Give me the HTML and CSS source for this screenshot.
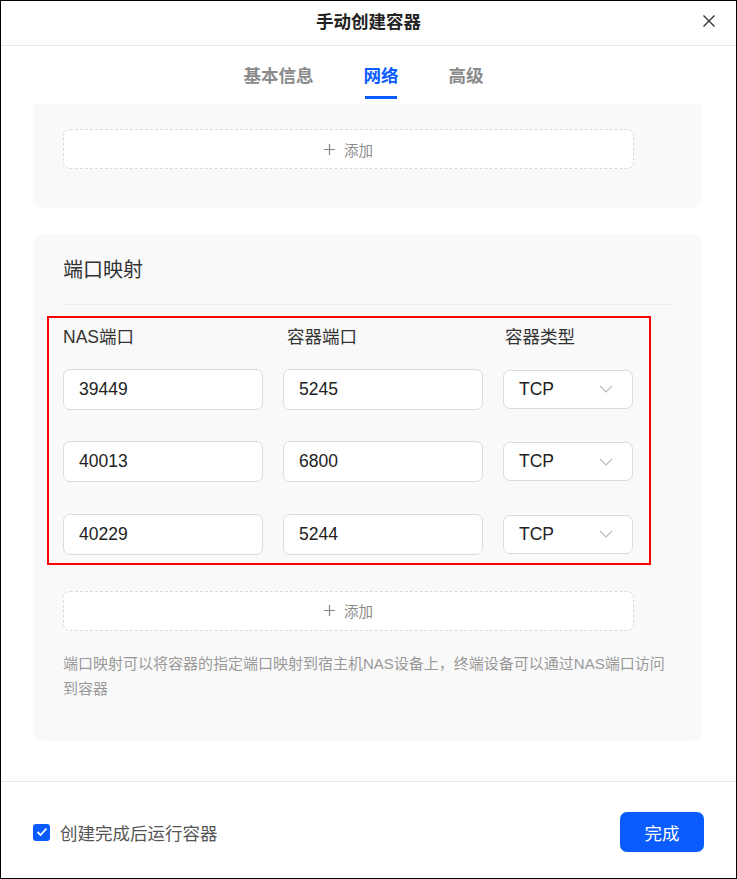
FILE: index.html
```html
<!DOCTYPE html>
<html lang="zh-CN">
<head>
    <meta charset="UTF-8">
    <meta name="viewport" content="width=device-width, initial-scale=1.0">
    <title>手动创建容器</title>
    <link rel="stylesheet" href="styles.css">
</head>
<body>

    <div class="dialog">
        <header class="dialog-header">
            <h1>手动创建容器</h1>
            <button class="close" aria-label="关闭">
                <svg width="14" height="14" viewBox="0 0 14 14">
                    <path d="M1.5 1.5L12.5 12.5M12.5 1.5L1.5 12.5" stroke="#333" stroke-width="1.4" fill="none"/>
                </svg>
            </button>
        </header>

        <nav class="tabs">
            <div class="tab">基本信息</div>
            <div class="tab active">网络</div>
            <div class="tab">高级</div>
        </nav>

        <div class="dialog-body">
            <!-- 上一块（已滚动出可视区） -->
            <section class="card card-cut">
                <button class="add-btn">
                    <svg class="plus" width="11" height="11" viewBox="0 0 11 11"><path d="M5.5 0v11M0 5.5h11" stroke="#888" stroke-width="1.2"/></svg>添加
                </button>
            </section>

            <section class="card">
                <h2>端口映射</h2>
                <div class="divider"></div>

                <div class="port-table">
                    <div class="port-head">NAS端口</div>
                    <div class="port-head">容器端口</div>
                    <div class="port-head">容器类型</div>

                    <input class="field" type="text" value="39449">
                    <input class="field" type="text" value="5245">
                    <div class="select">TCP<svg width="14" height="8" viewBox="0 0 14 8"><path d="M1 1l6 6 6-6" stroke="#bbb" stroke-width="1.2" fill="none"/></svg></div>

                    <input class="field" type="text" value="40013">
                    <input class="field" type="text" value="6800">
                    <div class="select">TCP<svg width="14" height="8" viewBox="0 0 14 8"><path d="M1 1l6 6 6-6" stroke="#bbb" stroke-width="1.2" fill="none"/></svg></div>

                    <input class="field" type="text" value="40229">
                    <input class="field" type="text" value="5244">
                    <div class="select">TCP<svg width="14" height="8" viewBox="0 0 14 8"><path d="M1 1l6 6 6-6" stroke="#bbb" stroke-width="1.2" fill="none"/></svg></div>

                    <div class="highlight"></div>
                </div>

                <button class="add-btn add-btn-ports">
                    <svg class="plus" width="11" height="11" viewBox="0 0 11 11"><path d="M5.5 0v11M0 5.5h11" stroke="#888" stroke-width="1.2"/></svg>添加
                </button>

                <p class="hint">端口映射可以将容器的指定端口映射到宿主机NAS设备上，终端设备可以通过NAS端口访问到容器</p>
            </section>
        </div>

        <footer class="dialog-footer">
            <label class="check">
                <span class="box">
                    <svg width="12" height="10" viewBox="0 0 12 10"><path d="M1.5 5l3 3 6-6.5" stroke="#fff" stroke-width="1.8" fill="none"/></svg>
                </span>
                创建完成后运行容器
            </label>
            <button class="primary">完成</button>
        </footer>
    </div>

</body>
</html>
```

FILE: styles.css
```css
* {
    box-sizing: border-box;
}
body {
    margin: 0;
    padding: 0;
    font-family: "Liberation Sans", "Noto Sans CJK SC", sans-serif;
    color: #333;
    background: #fff;
}
button {
    font-family: inherit;
}
.dialog {
    width: 737px;
    height: 879px;
    border: 1px solid #000;
    display: flex;
    flex-direction: column;
    overflow: hidden;
}
.dialog-header {
    height: 45px;
    flex: none;
    display: flex;
    align-items: center;
    justify-content: center;
    border-bottom: 1px solid #e8e8e8;
    position: relative;
}
.dialog-header h1 {
    margin: 0;
    font-size: 17.5px;
    font-weight: bold;
    color: #222;
    line-height: 24px;
    margin-top: -2px;
}
.close {
    position: absolute;
    right: 20px;
    top: 13px;
    border: 0;
    background: none;
    padding: 0;
    width: 14px;
    height: 14px;
    display: flex;
}
.tabs {
    height: 58px;
    flex: none;
    display: flex;
    justify-content: center;
    gap: 50px;
    padding-top: 18px;
    padding-right: 10px;
}
.tab {
    font-size: 17.5px;
    font-weight: bold;
    line-height: 24px;
    color: #8a8a8a;
}
.tab.active {
    color: #0a5cff;
}
.tab.active::after {
    content: "";
    display: block;
    width: 32px;
    height: 3px;
    margin: 8px auto 0;
    background: #0a5cff;
}
.dialog-body {
    flex: 1;
    overflow: hidden;
    padding: 0 34px 0 32px;
}
.card {
    background: #f9f9f9;
    border-radius: 10px;
    padding: 24px 30px 40px;
    margin-bottom: 26px;
}
.card-cut {
    border-radius: 0 0 10px 10px;
    padding-top: 25px;
    padding-bottom: 39px;
}
.card h2 {
    margin: 0;
    font-size: 20px;
    font-weight: normal;
    line-height: 24px;
    color: #333;
}
.divider {
    height: 1px;
    background: #ececec;
    margin-top: 22px;
}
.add-btn {
    display: flex;
    align-items: center;
    justify-content: center;
    width: 571px;
    height: 40px;
    background: #fff;
    border: 1px dashed #d9d9d9;
    border-radius: 7px;
    font-size: 14.5px;
    color: #8c8c8c;
}
.plus {
    margin-right: 9px;
}
.port-table {
    position: relative;
    display: grid;
    grid-template-columns: 200px 200px 130px;
    column-gap: 20px;
    row-gap: 31.5px;
    margin-top: 20px;
}
.port-head {
    font-size: 17.5px;
    line-height: 24px;
    color: #333;
    margin-bottom: -12px;
}
.port-head:nth-child(2) {
    padding-left: 4px;
}
.port-head:nth-child(3) {
    padding-left: 2px;
}
.field {
    height: 41px;
    width: 100%;
    border: 1px solid #dcdcdc;
    border-radius: 7px;
    background: #fff;
    padding: 0 15px;
    font-family: inherit;
    font-size: 17.5px;
    color: #222;
    outline: none;
}
.select {
    height: 39px;
    align-self: center;
    border: 1px solid #dcdcdc;
    border-radius: 7px;
    background: #fff;
    display: flex;
    align-items: center;
    justify-content: space-between;
    padding: 0 19px 0 15px;
    font-size: 17.5px;
    color: #222;
}
.highlight {
    position: absolute;
    left: -16px;
    top: -9px;
    width: 604px;
    height: 249px;
    border: 2px solid #f00;
    pointer-events: none;
}
.add-btn-ports {
    margin-top: 36px;
}
.hint {
    margin: 20px 0 0;
    font-size: 15px;
    line-height: 25px;
    color: #999;
}
.dialog-footer {
    height: 97px;
    flex: none;
    border-top: 1px solid #e8e8e8;
    display: flex;
    align-items: center;
    justify-content: space-between;
    padding: 4px 32px 0 32px;
}
.check {
    display: flex;
    align-items: center;
    font-size: 17.5px;
    color: #555;
}
.box {
    width: 17px;
    height: 17px;
    border-radius: 3px;
    background: #0a5cff;
    display: flex;
    align-items: center;
    justify-content: center;
    margin-right: 10px;
}
.primary {
    width: 84px;
    height: 40px;
    border: 0;
    border-radius: 7px;
    background: #0a5cff;
    color: #fff;
    font-size: 17.5px;
}
```
